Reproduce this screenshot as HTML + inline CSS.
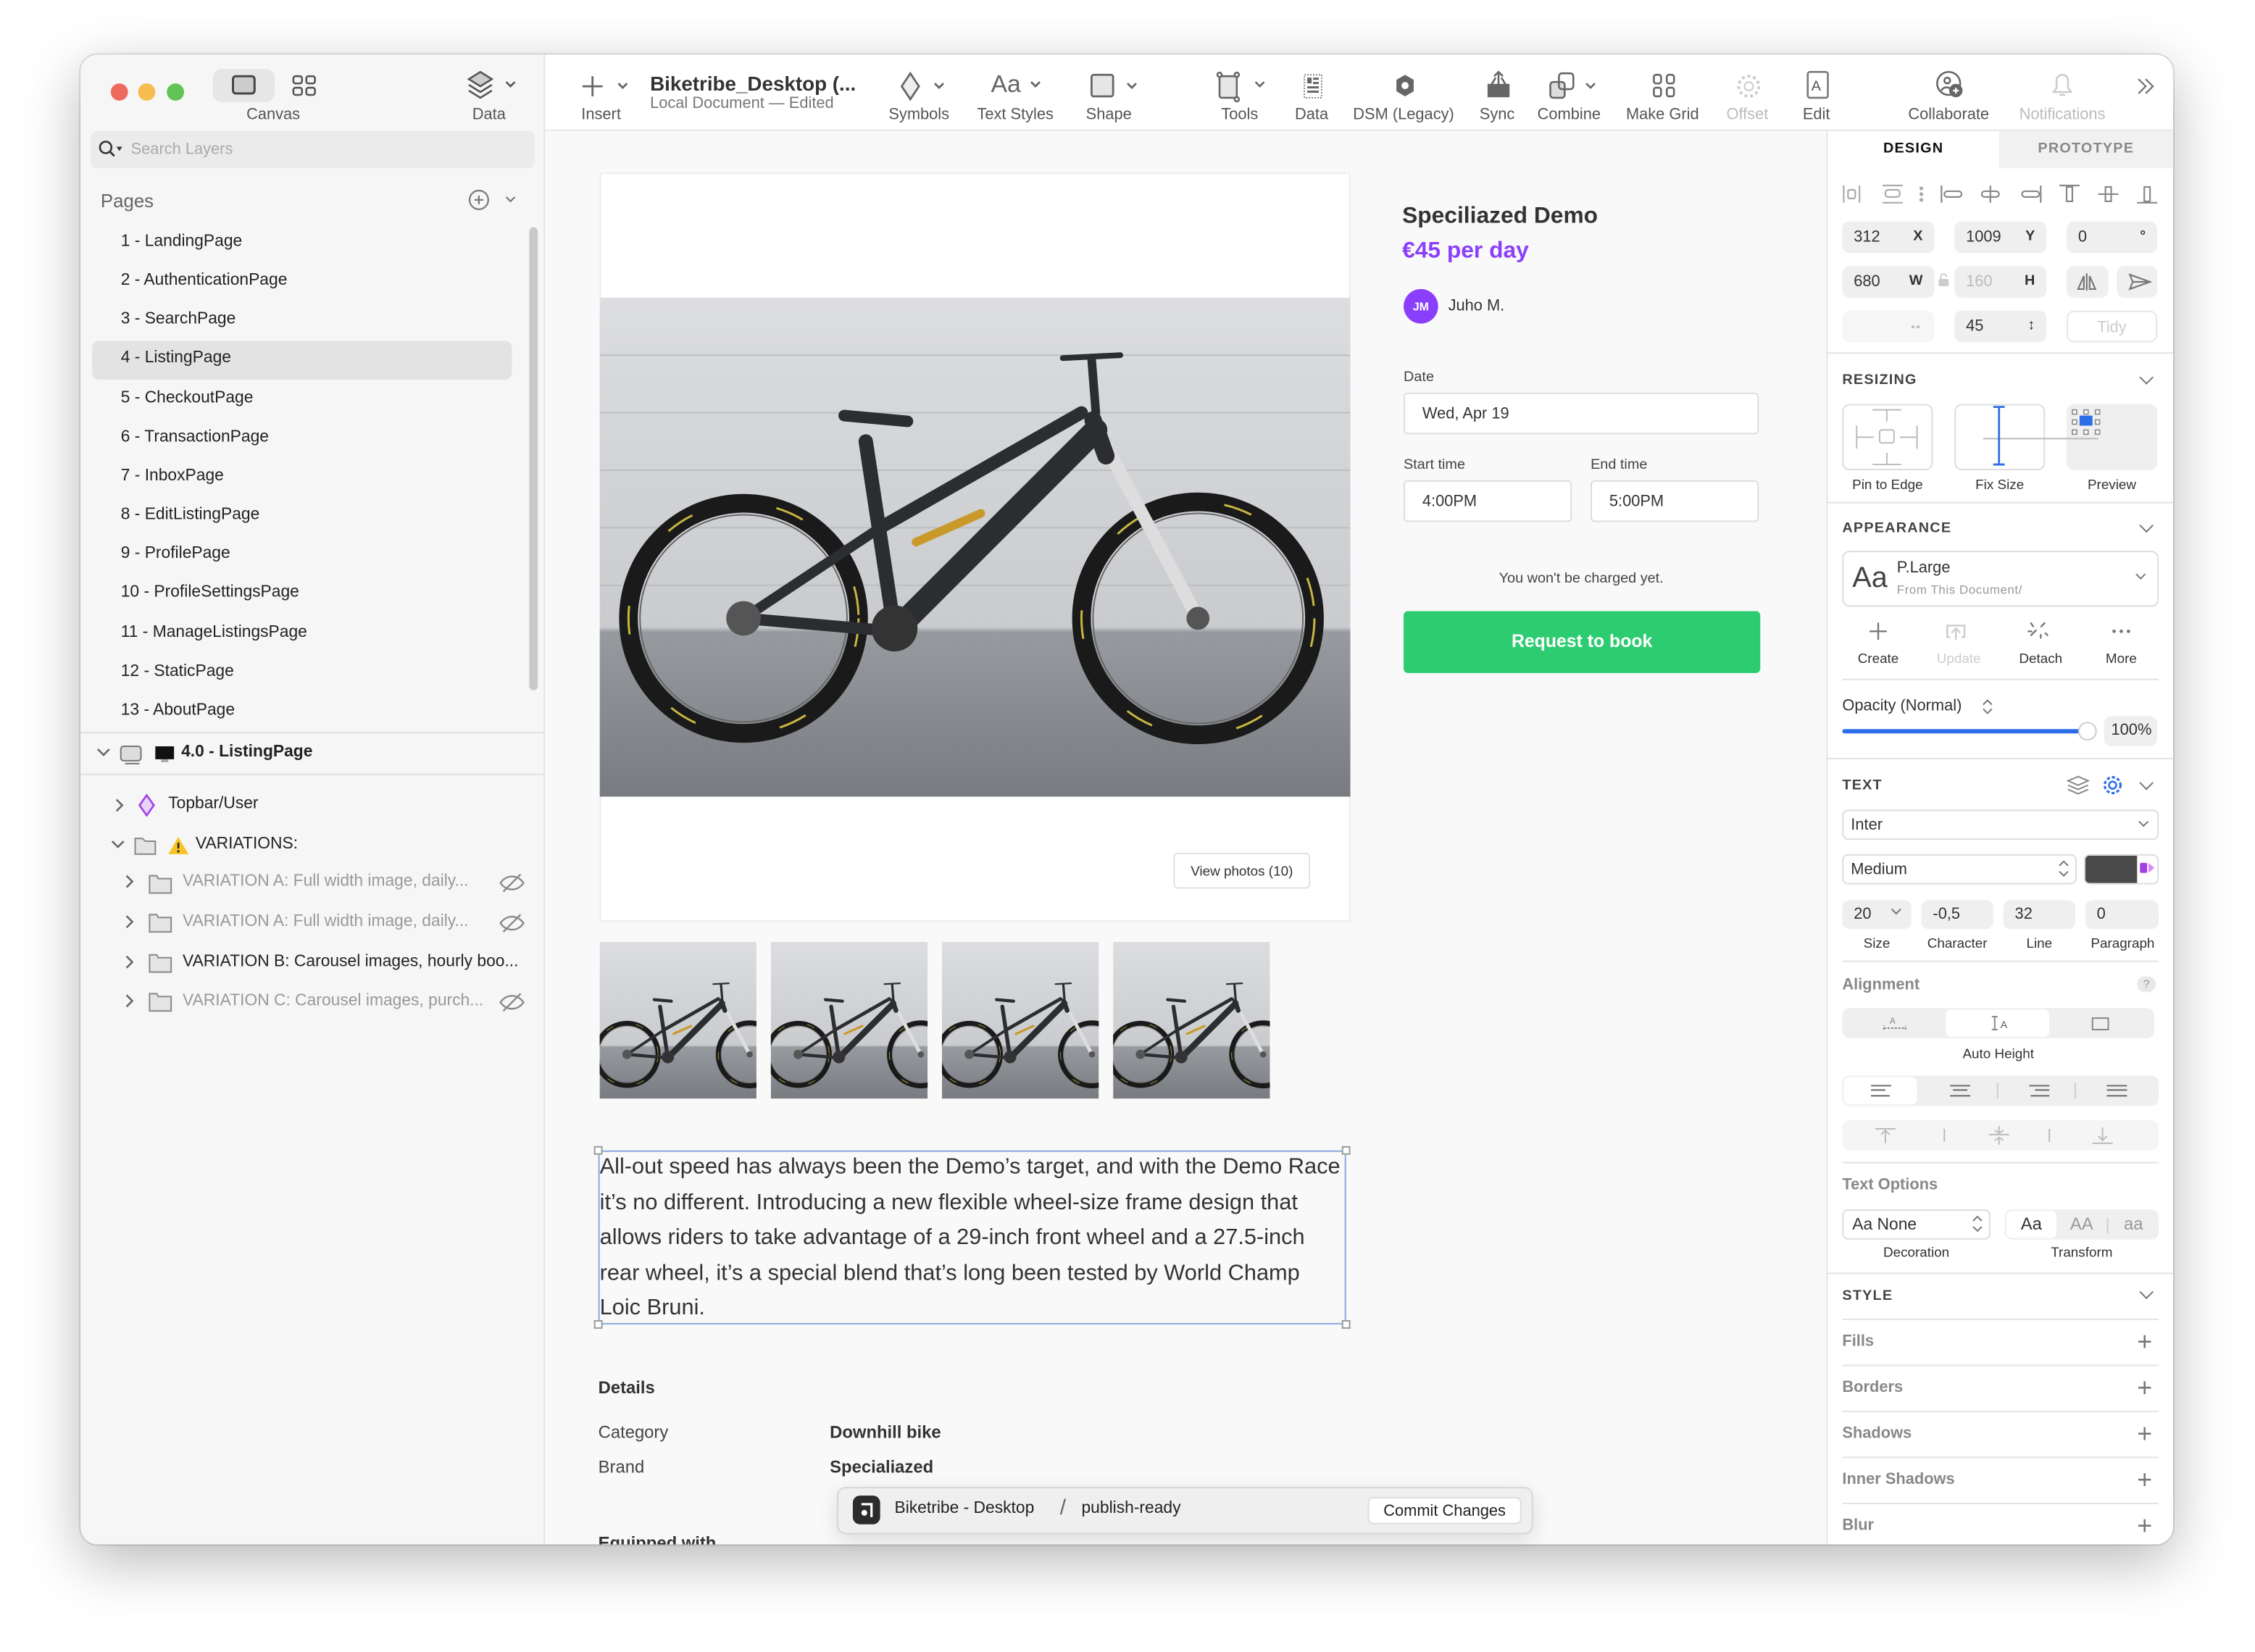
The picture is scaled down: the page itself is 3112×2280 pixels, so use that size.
<!DOCTYPE html>
<html><head><meta charset="utf-8">
<style>
*{box-sizing:border-box;margin:0;padding:0}
html,body{width:3112px;height:2280px;overflow:hidden;background:#fff}
#s{position:absolute;left:0;top:0;width:1568px;height:1149px;transform:scale(1.98469);transform-origin:0 0;font-family:"Liberation Sans",sans-serif;color:#222}
.a{position:absolute}
.win{left:56px;top:38px;width:1455px;height:1036px;border-radius:12px;overflow:hidden;background:#f9f9f9;box-shadow:0 12px 40px rgba(0,0,0,.28),0 0 0 1px rgba(0,0,0,.12)}
.lbl{font-size:11px;color:#555;text-align:center;white-space:nowrap}
.gry{color:#bbb}
.pg{position:absolute;left:84px;font-size:11.5px;color:#222;white-space:nowrap}
.rp{font-size:10.5px;color:#333}
.fld{position:absolute;height:22px;background:#efefef;border-radius:5px;font-size:11px;color:#333;padding:5px 0 0 8px}
.fld b{position:absolute;right:8px;top:5px;font-size:10px}
.sec{position:absolute;left:1281px;font-size:10px;font-weight:bold;letter-spacing:.6px;color:#444}
.hr{position:absolute;height:1px;background:#e3e3e3}
.chev{position:absolute;width:7px;height:7px;border-right:1.2px solid #777;border-bottom:1.2px solid #777;transform:rotate(45deg)}
.plus{position:absolute;font-size:18px;color:#777;line-height:1}
.st{position:absolute;left:1281px;font-size:11px;font-weight:bold;color:#888}
</style></head><body><div id="s">
<div class="a win"></div>
<div class="a" style="left:56px;top:38px;width:323px;height:1036px;background:#f6f6f6;border-right:1px solid #e2e2e2;border-radius:12px 0 0 12px"></div>
<div class="a" style="left:379px;top:38px;width:1132px;height:53px;background:#fff;border-bottom:1px solid #e4e4e4;border-radius:0 12px 0 0"></div>
<div class="a" style="left:1270px;top:91px;width:241px;height:983px;background:#fff;border-left:1px solid #e4e4e4;border-radius:0 0 12px 0"></div>

<div class="a" style="left:77px;top:58px;width:12px;height:12px;border-radius:50%;background:#ee6a5f"></div>
<div class="a" style="left:96px;top:58px;width:12px;height:12px;border-radius:50%;background:#f5bd4f"></div>
<div class="a" style="left:116px;top:58px;width:12px;height:12px;border-radius:50%;background:#61c454"></div>
<div class="a" style="left:148px;top:48px;width:43px;height:23px;border-radius:6px;background:#e6e6e6"></div>
<svg class="a" style="left:160px;top:51px" width="20" height="17"><rect x="2" y="2" width="15" height="12" rx="2" fill="#ccc" stroke="#444" stroke-width="1.5"/></svg>
<svg class="a" style="left:202px;top:51px" width="20" height="17"><g fill="none" stroke="#555" stroke-width="1.3"><rect x="2" y="2" width="6" height="5" rx="1.5"/><rect x="11" y="2" width="6" height="5" rx="1.5"/><rect x="2" y="10" width="6" height="5" rx="1.5"/><rect x="11" y="10" width="6" height="5" rx="1.5"/></g></svg>
<div class="a lbl" style="left:160px;top:74px;width:60px">Canvas</div>
<svg class="a" style="left:323px;top:48px" width="40" height="22"><g fill="none" stroke="#555" stroke-width="1.3"><path d="M3 7l8-5 8 5-8 5z" fill="#ccc"/><path d="M3 11l8 5 8-5M3 15l8 5 8-5"/><path d="M29 9l3 3 3-3"/></g></svg>
<div class="a lbl" style="left:320px;top:74px;width:40px">Data</div>

<svg class="a" style="left:402px;top:50px" width="40" height="20"><g fill="none" stroke="#666" stroke-width="1.4"><path d="M10 3v14M3 10h14"/><path d="M28 8l3 3 3-3"/></g></svg>
<div class="a lbl" style="left:398px;top:74px;width:40px">Insert</div>
<div class="a" style="left:452px;top:50px;font-size:14px;font-weight:bold;color:#333;white-space:nowrap">Biketribe_Desktop (...</div>
<div class="a" style="left:452px;top:66px;font-size:11px;color:#777;white-space:nowrap">Local Document — Edited</div>
<svg class="a" style="left:623px;top:49px" width="40" height="22"><g fill="none" stroke="#666" stroke-width="1.4"><path d="M10 2l6 9-6 9-6-9z" fill="#eee"/><path d="M27 9l3 3 3-3"/></g></svg>
<div class="a lbl" style="left:609px;top:74px;width:60px">Symbols</div>
<div class="a" style="left:689px;top:49px;font-size:17px;color:#666">Aa</div>
<svg class="a" style="left:714px;top:52px" width="14" height="14"><path d="M3 5l3 3 3-3" fill="none" stroke="#666" stroke-width="1.4"/></svg>
<div class="a lbl" style="left:670px;top:74px;width:72px">Text Styles</div>
<svg class="a" style="left:756px;top:49px" width="40" height="22"><g fill="none" stroke="#666" stroke-width="1.4"><rect x="3" y="3" width="15" height="15" rx="1.5" fill="#e6e6e6"/><path d="M28 9l3 3 3-3"/></g></svg>
<div class="a lbl" style="left:741px;top:74px;width:60px">Shape</div>
<svg class="a" style="left:845px;top:48px" width="40" height="24"><g fill="none" stroke="#666" stroke-width="1.3"><rect x="3" y="5" width="12" height="15" rx="1.5" fill="#e6e6e6"/><circle cx="3" cy="4" r="1.5"/><circle cx="15" cy="4" r="1.5"/><circle cx="15" cy="21" r="1.5"/><path d="M28 9l3 3 3-3"/></g></svg>
<div class="a lbl" style="left:842px;top:74px;width:40px">Tools</div>
<svg class="a" style="left:904px;top:50px" width="18" height="20"><g fill="#666"><rect x="3" y="2" width="12" height="16" fill="none" stroke="#888" stroke-dasharray="1 1"/><rect x="5" y="4" width="3" height="4"/><rect x="9" y="4" width="4" height="1.5"/><rect x="9" y="7" width="4" height="1.5"/><rect x="5" y="10" width="8" height="1.5"/><rect x="5" y="13" width="8" height="1.5"/></g></svg>
<div class="a lbl" style="left:892px;top:74px;width:40px">Data</div>
<svg class="a" style="left:968px;top:50px" width="18" height="20"><path d="M9 2l6 3.5v8L9 17l-6-3.5v-8z" fill="#666"/><circle cx="9" cy="9.5" r="2.5" fill="#fff"/></svg>
<div class="a lbl" style="left:936px;top:74px;width:80px">DSM (Legacy)</div>
<svg class="a" style="left:1032px;top:48px" width="20" height="22"><g stroke="#666" stroke-width="1.3" fill="none"><path d="M3 11h14v8H3z" fill="#666"/><path d="M5 11l3-5M15 11l-3-5"/><path d="M10 14V2M7 5l3-3 3 3"/></g></svg>
<div class="a lbl" style="left:1021px;top:74px;width:40px">Sync</div>
<svg class="a" style="left:1076px;top:49px" width="40" height="22"><g stroke="#666" stroke-width="1.3" fill="none"><rect x="2" y="8" width="10" height="11" rx="2" fill="#ddd"/><rect x="8" y="2" width="10" height="11" rx="2"/><path d="M27 9l3 3 3-3"/></g></svg>
<div class="a lbl" style="left:1061px;top:74px;width:60px">Combine</div>
<svg class="a" style="left:1148px;top:50px" width="20" height="20"><g fill="none" stroke="#666" stroke-width="1.3"><rect x="2" y="2" width="5" height="6" rx="1.5"/><rect x="11" y="2" width="5" height="6" rx="1.5"/><rect x="2" y="11" width="5" height="6" rx="1.5"/><rect x="11" y="11" width="5" height="6" rx="1.5"/></g></svg>
<div class="a lbl" style="left:1121px;top:74px;width:70px">Make Grid</div>
<svg class="a" style="left:1206px;top:50px" width="20" height="20"><circle cx="10" cy="10" r="7" fill="none" stroke="#ccc" stroke-width="2" stroke-dasharray="2 2"/><circle cx="10" cy="10" r="3" fill="none" stroke="#ccc"/></svg>
<div class="a lbl gry" style="left:1195px;top:74px;width:40px">Offset</div>
<svg class="a" style="left:1254px;top:48px" width="20" height="22"><rect x="3" y="2" width="14" height="18" rx="1.5" fill="none" stroke="#777" stroke-width="1.3"/><text x="5.5" y="15" font-size="10" font-family="Liberation Sans" fill="#555">A</text></svg>
<div class="a lbl" style="left:1243px;top:74px;width:40px">Edit</div>
<svg class="a" style="left:1345px;top:48px" width="22" height="22"><g fill="none" stroke="#666" stroke-width="1.3"><circle cx="10" cy="10" r="8"/><circle cx="9" cy="8" r="2"/><path d="M5 15c1-3 6-3 7 0"/><circle cx="15" cy="15" r="4" fill="#666"/></g><path d="M15 13v4M13 15h4" stroke="#fff" stroke-width="1.2"/></svg>
<div class="a lbl" style="left:1320px;top:74px;width:70px">Collaborate</div>
<svg class="a" style="left:1424px;top:48px" width="20" height="22"><path d="M4 16h12l-2-3V8a4 4 0 0 0-8 0v5zM8 18h4" fill="none" stroke="#ccc" stroke-width="1.3"/></svg>
<div class="a lbl gry" style="left:1394px;top:74px;width:80px">Notifications</div>
<svg class="a" style="left:1484px;top:52px" width="16" height="16"><path d="M3 3l5 5-5 5M8 3l5 5-5 5" fill="none" stroke="#777" stroke-width="1.2"/></svg>

<div class="a" style="left:63px;top:91px;width:309px;height:26px;background:#ebebeb;border-radius:5px"></div>
<svg class="a" style="left:68px;top:97px" width="18" height="14"><circle cx="5.5" cy="5.5" r="4" fill="none" stroke="#333" stroke-width="1.3"/><path d="M8.5 8.5l3 3" stroke="#333" stroke-width="1.4"/><path d="M13 5h4l-2 3z" fill="#333"/></svg>
<div class="a" style="left:91px;top:98px;font-size:11px;color:#aaa">Search Layers</div>

<div class="a" style="left:70px;top:132px;font-size:13px;color:#666">Pages</div>
<svg class="a" style="left:325px;top:131px" width="40" height="16"><circle cx="8" cy="8" r="6.5" fill="none" stroke="#777" stroke-width="1.1"/><path d="M8 5v6M5 8h6M27 6l3 3 3-3" stroke="#777" stroke-width="1.1" fill="none"/></svg>
<div class="a" style="left:64px;top:237px;width:292px;height:27px;background:#e3e3e3;border-radius:5px"></div>
<div class="a" style="left:368px;top:158px;width:6px;height:322px;background:#c9c9c9;border-radius:3px"></div>
<div class="pg" style="top:162px">1 - LandingPage</div>
<div class="pg" style="top:189px">2 - AuthenticationPage</div>
<div class="pg" style="top:216px">3 - SearchPage</div>
<div class="pg" style="top:243px">4 - ListingPage</div>
<div class="pg" style="top:271px">5 - CheckoutPage</div>
<div class="pg" style="top:298px">6 - TransactionPage</div>
<div class="pg" style="top:325px">7 - InboxPage</div>
<div class="pg" style="top:352px">8 - EditListingPage</div>
<div class="pg" style="top:379px">9 - ProfilePage</div>
<div class="pg" style="top:406px">10 - ProfileSettingsPage</div>
<div class="pg" style="top:434px">11 - ManageListingsPage</div>
<div class="pg" style="top:461px">12 - StaticPage</div>
<div class="pg" style="top:488px">13 - AboutPage</div>
<div class="hr" style="left:56px;top:509px;width:323px;background:#e0e0e0"></div>
<div class="hr" style="left:56px;top:538px;width:323px;background:#e0e0e0"></div>
<svg class="a" style="left:65px;top:516px" width="80" height="18"><path d="M3 5l4 4 4-4" fill="none" stroke="#666" stroke-width="1.3"/><rect x="19" y="3" width="14" height="10" rx="2" fill="#ddd" stroke="#777"/><path d="M22 15h10" stroke="#777"/><rect x="43" y="3" width="13" height="9" fill="#111"/><rect x="47" y="12" width="5" height="2" fill="#aaa"/></svg>
<div class="a" style="left:126px;top:517px;font-size:11.5px;font-weight:bold;color:#222">4.0 - ListingPage</div>
<svg class="a" style="left:78px;top:552px" width="34" height="16"><path d="M3 4l4 4-4 4" fill="none" stroke="#666" stroke-width="1.3"/><path d="M24 1l5 7-5 7-5-7z" fill="#e6d4fa" stroke="#a23ee6" stroke-width="1.3"/></svg>
<div class="a" style="left:117px;top:553px;font-size:11.5px;color:#222">Topbar/User</div>
<svg class="a" style="left:76px;top:580px" width="60" height="16"><path d="M2 5l4 4 4-4" fill="none" stroke="#666" stroke-width="1.3"/><path d="M18 3h5l2 2h7v9H18z" fill="#e4e4e4" stroke="#888"/><path d="M48 2l7 12H41z" fill="#f7c325"/><path d="M48 6v4" stroke="#222" stroke-width="1.3"/><circle cx="48" cy="12" r=".8" fill="#222"/></svg>
<div class="a" style="left:136px;top:581px;font-size:11.5px;color:#222">VARIATIONS:</div>
<svg class="a" style="left:86px;top:606px" width="36" height="100"><g fill="#e4e4e4" stroke="#888"><path d="M2 3l4 4-4 4" fill="none" stroke="#666" stroke-width="1.3"/><path d="M18 3h5l1 2h9v10H18z"/><path d="M2 31l4 4-4 4" fill="none" stroke="#666" stroke-width="1.3"/><path d="M18 30h5l1 2h9v10H18z"/><path d="M2 59l4 4-4 4" fill="none" stroke="#666" stroke-width="1.3"/><path d="M18 58h5l1 2h9v10H18z"/><path d="M2 86l4 4-4 4" fill="none" stroke="#666" stroke-width="1.3"/><path d="M18 85h5l1 2h9v10H18z"/></g></svg>
<div class="a" style="left:127px;top:607px;font-size:11.5px;color:#999;white-space:nowrap">VARIATION A: Full width image, daily...</div>
<div class="a" style="left:127px;top:635px;font-size:11.5px;color:#999;white-space:nowrap">VARIATION A: Full width image, daily...</div>
<div class="a" style="left:127px;top:663px;font-size:11.5px;color:#222;white-space:nowrap">VARIATION B: Carousel images, hourly boo...</div>
<div class="a" style="left:127px;top:690px;font-size:11.5px;color:#999;white-space:nowrap">VARIATION C: Carousel images, purch...</div>
<svg class="a" style="left:346px;top:606px" width="20" height="100"><g fill="none" stroke="#888" stroke-width="1.2"><path d="M2 8c4-6 12-6 16 0-4 6-12 6-16 0zM4 14L16 2"/><path d="M2 36c4-6 12-6 16 0-4 6-12 6-16 0zM4 42L16 30"/><path d="M2 91c4-6 12-6 16 0-4 6-12 6-16 0zM4 97L16 85"/></g></svg>

<div class="a" style="left:417px;top:120px;width:522px;height:521px;background:#fff;border:1px solid #ececec"></div>
<svg class="a" style="left:417px;top:207px" width="522" height="347" viewBox="0 0 522 347">
<defs><linearGradient id="w" x1="0" y1="0" x2="0" y2="1"><stop offset="0" stop-color="#dcdde0"/><stop offset=".66" stop-color="#c9cbce"/><stop offset=".67" stop-color="#979a9f"/><stop offset="1" stop-color="#787b80"/></linearGradient>
<g id="bike"><g fill="none" stroke="#1a1a1a"><circle cx="100" cy="223" r="80" stroke-width="13"/><circle cx="416" cy="223" r="81" stroke-width="13"/><circle cx="100" cy="223" r="72" stroke="#666" stroke-width="1"/><circle cx="416" cy="223" r="73" stroke="#666" stroke-width="1"/></g><circle cx="100" cy="223" r="80" fill="none" stroke="#c9b640" stroke-width="1.5" stroke-dasharray="20 60"/><circle cx="416" cy="223" r="81" fill="none" stroke="#c9b640" stroke-width="1.5" stroke-dasharray="20 60"/><g stroke="#2b2d30" stroke-linecap="round" fill="none"><path d="M205 232L345 92" stroke-width="16"/><path d="M195 160L335 80" stroke-width="9"/><path d="M205 232L185 100" stroke-width="10"/><path d="M205 232L100 223" stroke-width="8"/><path d="M195 160L100 223" stroke-width="7"/><path d="M345 90L416 223" stroke="#ddd" stroke-width="9"/><path d="M343 85L352 110" stroke-width="12"/><path d="M322 42L362 40" stroke-width="4"/><path d="M342 42L345 80" stroke-width="6"/><path d="M170 82L214 86" stroke-width="8"/><path d="M220 170L265 150" stroke="#c99a2a" stroke-width="6"/></g><circle cx="205" cy="230" r="16" fill="#333"/><circle cx="100" cy="223" r="12" fill="#555"/><circle cx="416" cy="223" r="8" fill="#555"/></g></defs>
<rect width="522" height="347" fill="url(#w)"/>
<g stroke="#bcbec1" stroke-width="1"><path d="M0 40h522M0 80h522M0 120h522M0 160h522M0 200h522"/></g>
<use href="#bike"/>
</svg>
<div class="a" style="left:816px;top:593px;width:95px;height:25px;border:1px solid #e2e2e2;border-radius:3px;background:#fff;font-size:9.5px;color:#333;text-align:center;padding-top:7px">View photos (10)</div>
<svg class="a" style="left:417px;top:655px" width="470" height="110">
<defs><clipPath id="c"><rect width="109" height="109"/></clipPath></defs>
<g clip-path="url(#c)"><rect width="109" height="109" fill="url(#w)"/><g transform="translate(-8,18) scale(.27)"><use href="#bike"/></g></g>
<g transform="translate(119,0)" clip-path="url(#c)"><rect width="109" height="109" fill="url(#w)"/><g transform="translate(-8,18) scale(.27)"><use href="#bike"/></g></g>
<g transform="translate(238,0)" clip-path="url(#c)"><rect width="109" height="109" fill="url(#w)"/><g transform="translate(-8,18) scale(.27)"><use href="#bike"/></g></g>
<g transform="translate(357,0)" clip-path="url(#c)"><rect width="109" height="109" fill="url(#w)"/><g transform="translate(-8,18) scale(.27)"><use href="#bike"/></g></g>
</svg>
<div class="a" style="left:416px;top:800px;width:520px;height:121px;border:1px solid #8aa7e0"></div>
<div class="a" style="left:413px;top:797px;width:6px;height:6px;border:1px solid #999;background:#fff"></div>
<div class="a" style="left:933px;top:797px;width:6px;height:6px;border:1px solid #999;background:#fff"></div>
<div class="a" style="left:413px;top:918px;width:6px;height:6px;border:1px solid #999;background:#fff"></div>
<div class="a" style="left:933px;top:918px;width:6px;height:6px;border:1px solid #999;background:#fff"></div>
<div class="a" style="left:417px;top:800px;font-size:15.5px;line-height:24.6px;color:#333;white-space:nowrap">All-out speed has always been the Demo’s target, and with the Demo Race<br>it’s no different. Introducing a new flexible wheel-size frame design that<br>allows riders to take advantage of a 29-inch front wheel and a 27.5-inch<br>rear wheel, it’s a special blend that’s long been tested by World Champ<br>Loic Bruni.</div>
<div class="a" style="left:416px;top:958px;font-size:12px;font-weight:bold;color:#333">Details</div>
<div class="a" style="left:416px;top:989px;font-size:12px;color:#444">Category</div>
<div class="a" style="left:577px;top:989px;font-size:12px;font-weight:bold;color:#333">Downhill bike</div>
<div class="a" style="left:416px;top:1013px;font-size:12px;color:#444">Brand</div>
<div class="a" style="left:577px;top:1013px;font-size:12px;font-weight:bold;color:#333">Specialiazed</div>
<div class="a" style="left:416px;top:1066px;font-size:12px;font-weight:bold;color:#333;height:8px;overflow:hidden">Equipped with</div>
<div class="a" style="left:975px;top:142px;font-size:16px;font-weight:bold;color:#333">Speciliazed Demo</div>
<div class="a" style="left:975px;top:166px;font-size:16px;font-weight:bold;color:#8a3ffc">€45 per day</div>
<div class="a" style="left:976px;top:201px;width:24px;height:24px;border-radius:50%;background:#8a3ffc;color:#fff;font-size:8px;font-weight:bold;text-align:center;padding-top:7.5px">JM</div>
<div class="a" style="left:1007px;top:207px;font-size:11px;color:#333">Juho M.</div>
<div class="a" style="left:976px;top:257px;font-size:10px;color:#444">Date</div>
<div class="a" style="left:976px;top:273px;width:247px;height:29px;border:1px solid #ddd;border-radius:3px;background:#fff;font-size:11px;color:#333;padding:8px 0 0 12px">Wed, Apr 19</div>
<div class="a" style="left:976px;top:318px;font-size:10px;color:#444">Start time</div>
<div class="a" style="left:1106px;top:318px;font-size:10px;color:#444">End time</div>
<div class="a" style="left:976px;top:334px;width:117px;height:29px;border:1px solid #ddd;border-radius:3px;background:#fff;font-size:11px;color:#333;padding:8px 0 0 12px">4:00PM</div>
<div class="a" style="left:1106px;top:334px;width:117px;height:29px;border:1px solid #ddd;border-radius:3px;background:#fff;font-size:11px;color:#333;padding:8px 0 0 12px">5:00PM</div>
<div class="a" style="left:976px;top:397px;width:247px;text-align:center;font-size:10px;color:#444">You won't be charged yet.</div>
<div class="a" style="left:976px;top:425px;width:248px;height:43px;border-radius:3px;background:#2ecc71;color:#fff;font-size:12.5px;font-weight:bold;text-align:center;padding-top:14px">Request to book</div>
<div class="a" style="left:582px;top:1034px;width:484px;height:33px;background:#efefef;border:1px solid #d6d6d6;border-radius:6px;box-shadow:0 4px 14px rgba(0,0,0,.12)"></div>
<div class="a" style="left:593px;top:1040px;width:19px;height:20px;border-radius:5px;background:#2b2b2b"></div>
<svg class="a" style="left:593px;top:1040px" width="19" height="20"><path d="M6 6h7v9" fill="none" stroke="#fff" stroke-width="1.6"/><circle cx="8" cy="12" r="2" fill="#fff"/></svg>
<div class="a" style="left:622px;top:1043px;font-size:11.5px;color:#222;white-space:nowrap">Biketribe - Desktop</div>
<div class="a" style="left:737px;top:1040px;font-size:15px;color:#666">/</div>
<div class="a" style="left:752px;top:1043px;font-size:11.5px;color:#222">publish-ready</div>
<div class="a" style="left:951px;top:1041px;width:107px;height:19px;background:#fff;border:1px solid #ddd;border-radius:4px;font-size:11px;color:#222;text-align:center;padding-top:3px">Commit Changes</div>

<div class="a" style="left:1390px;top:91px;width:121px;height:26px;background:#f1f1f1"></div>
<div class="a" style="left:1271px;top:98px;width:119px;text-align:center;font-size:10px;font-weight:bold;letter-spacing:.6px;color:#111">DESIGN</div>
<div class="a" style="left:1390px;top:98px;width:121px;text-align:center;font-size:10px;font-weight:bold;letter-spacing:.6px;color:#888">PROTOTYPE</div>
<svg class="a" style="left:1280px;top:126px" width="222" height="18"><g fill="none" stroke="#aaa" stroke-width="1.1"><path d="M2 3v12M13 3v12"/><rect x="5" y="6" width="5" height="6" rx="1"/><path d="M29 3h14M29 15h14"/><rect x="31" y="6" width="10" height="5" rx="2"/><circle cx="56" cy="5" r=".8" fill="#aaa"/><circle cx="56" cy="9" r=".8" fill="#aaa"/><circle cx="56" cy="13" r=".8" fill="#aaa"/><path d="M70 3v12" stroke="#888"/><rect x="72" y="7" width="12" height="4" rx="2" stroke="#888"/><path d="M104 3v12" stroke="#888"/><rect x="98" y="7" width="12" height="4" rx="2" stroke="#888"/><path d="M139 3v12" stroke="#888"/><rect x="126" y="7" width="12" height="4" rx="2" stroke="#888"/><path d="M152 3h14" stroke="#888"/><rect x="157" y="4" width="4" height="10" stroke="#888"/><path d="M179 9h14" stroke="#888"/><rect x="184" y="4" width="4" height="10" stroke="#888"/><path d="M206 15h14" stroke="#888"/><rect x="211" y="4" width="4" height="10" stroke="#888"/></g></svg>
<div class="fld" style="left:1281px;top:154px;width:64px">312<b>X</b></div>
<div class="fld" style="left:1359px;top:154px;width:64px">1009<b>Y</b></div>
<div class="fld" style="left:1437px;top:154px;width:63px">0<b>°</b></div>
<div class="fld" style="left:1281px;top:185px;width:64px">680<b>W</b></div>
<svg class="a" style="left:1346px;top:189px" width="12" height="12"><rect x="2" y="5" width="7" height="5" rx="1" fill="#ccc"/><path d="M3.5 5V3.5a2 2 0 0 1 4 0" fill="none" stroke="#ccc"/></svg>
<div class="fld" style="left:1359px;top:185px;width:64px;color:#bbb">160<b style="color:#333">H</b></div>
<div class="fld" style="left:1437px;top:185px;width:29px"></div>
<div class="fld" style="left:1472px;top:185px;width:28px"></div>
<svg class="a" style="left:1444px;top:188px" width="54" height="16"><g fill="none" stroke="#777" stroke-width="1.1"><path d="M7 2v12M5 4l-4 9h4zM9 4l4 9H9z"/><path d="M37 3l14 5-14 5 2-5z M39 8h12"/></g></svg>
<div class="fld" style="left:1281px;top:216px;width:64px;background:#f6f6f6"><b style="color:#999">↔</b></div>
<div class="fld" style="left:1359px;top:216px;width:64px">45<b>↕</b></div>
<div class="a" style="left:1437px;top:216px;width:63px;height:22px;border:1px solid #e6e6e6;border-radius:5px;font-size:11px;color:#ccc;text-align:center;padding-top:5px">Tidy</div>
<div class="hr" style="left:1270px;top:245px;width:241px"></div>
<div class="sec" style="top:259px">RESIZING</div>
<div class="chev" style="left:1489px;top:259px"></div>
<div class="a" style="left:1281px;top:281px;width:63px;height:46px;border:1px solid #ddd;border-radius:5px;background:#fff"></div>
<div class="a" style="left:1359px;top:281px;width:63px;height:46px;border:1px solid #ddd;border-radius:5px;background:#fff"></div>
<div class="a" style="left:1437px;top:281px;width:63px;height:46px;border-radius:5px;background:#efefef"></div>
<svg class="a" style="left:1281px;top:281px" width="222" height="46"><g fill="none" stroke="#bbb" stroke-width="1"><path d="M21 4h20M31 4v8M21 42h20M31 42v-8M10 15v16M10 23h12M52 15v16M52 23H40"/><rect x="26" y="18" width="10" height="9" rx="1.5"/><path d="M98 24h80"/></g><path d="M109 2v40M105 2h8M105 42h8" stroke="#2d6ee8" stroke-width="1.4"/><g fill="#fff" stroke="#888" stroke-width=".8"><rect x="160" y="4" width="3" height="3"/><rect x="168" y="4" width="3" height="3"/><rect x="176" y="4" width="3" height="3"/><rect x="160" y="11" width="3" height="3"/><rect x="176" y="11" width="3" height="3"/><rect x="160" y="18" width="3" height="3"/><rect x="168" y="18" width="3" height="3"/><rect x="176" y="18" width="3" height="3"/></g><rect x="165" y="8" width="9" height="7" fill="#2d6ee8"/></svg>
<div class="a rp" style="left:1281px;top:332px;width:63px;text-align:center;font-size:9.5px">Pin to Edge</div>
<div class="a rp" style="left:1359px;top:332px;width:63px;text-align:center;font-size:9.5px">Fix Size</div>
<div class="a rp" style="left:1437px;top:332px;width:63px;text-align:center;font-size:9.5px">Preview</div>
<div class="hr" style="left:1270px;top:349px;width:241px"></div>
<div class="sec" style="top:362px">APPEARANCE</div>
<div class="chev" style="left:1489px;top:362px"></div>
<div class="a" style="left:1281px;top:383px;width:220px;height:39px;border:1px solid #ddd;border-radius:5px;background:#fff"></div>
<div class="a" style="left:1288px;top:391px;font-size:20px;color:#444">Aa</div>
<div class="a" style="left:1319px;top:389px;font-size:11px;color:#333">P.Large</div>
<div class="a" style="left:1319px;top:405px;font-size:8.5px;color:#999;letter-spacing:.3px">From This Document/</div>
<div class="chev" style="left:1486px;top:397px;width:5px;height:5px"></div>
<svg class="a" style="left:1296px;top:430px" width="190" height="18"><g fill="none" stroke-width="1.2"><path d="M10 3v12M4 9h12" stroke="#777"/><path d="M60 13h-2V5h12v8h-2M64 15V8M61 10l3-3 3 3" stroke="#ccc"/><path d="M116 12l4-4M123 6l3-3M116 3l2 3M128 12l-2-2M114 9h3M123 14v-3" stroke="#777"/><circle cx="174" cy="9" r="1.2" fill="#777" stroke="none"/><circle cx="179" cy="9" r="1.2" fill="#777" stroke="none"/><circle cx="184" cy="9" r="1.2" fill="#777" stroke="none"/></g></svg>
<div class="a rp" style="left:1286px;top:453px;width:40px;text-align:center;font-size:9.5px">Create</div>
<div class="a rp" style="left:1342px;top:453px;width:40px;text-align:center;font-size:9.5px;color:#ccc">Update</div>
<div class="a rp" style="left:1396px;top:453px;width:46px;text-align:center;font-size:9.5px">Detach</div>
<div class="a rp" style="left:1455px;top:453px;width:40px;text-align:center;font-size:9.5px">More</div>
<div class="hr" style="left:1281px;top:472px;width:220px"></div>
<div class="a rp" style="left:1281px;top:485px;font-size:11px">Opacity (Normal)</div>
<svg class="a" style="left:1377px;top:485px" width="10" height="13"><path d="M2 5l3-3 3 3M2 8l3 3 3-3" fill="none" stroke="#777"/></svg>
<div class="a" style="left:1281px;top:507px;width:170px;height:2.5px;background:#2d6ee8;border-radius:2px"></div>
<div class="a" style="left:1445px;top:502px;width:13px;height:13px;border-radius:50%;background:#fff;border:1px solid #ccc"></div>
<div class="fld" style="left:1463px;top:498px;width:37px;height:21px;padding:4px 0 0 5px">100%</div>
<div class="hr" style="left:1270px;top:527px;width:241px"></div>
<div class="sec" style="top:541px">TEXT</div>
<svg class="a" style="left:1436px;top:538px" width="44" height="16"><g fill="none" stroke-width="1"><path d="M2 5l7-3 7 3-7 3z M2 8l7 3 7-3M2 11l7 3 7-3" stroke="#888"/><circle cx="33" cy="8" r="2.5" stroke="#2d6ee8" stroke-width="1.3"/><circle cx="33" cy="8" r="5.5" stroke="#2d6ee8" stroke-width="1.6" stroke-dasharray="2.2 1.4"/></g></svg>
<div class="chev" style="left:1489px;top:541px"></div>
<div class="a" style="left:1281px;top:563px;width:220px;height:21px;border:1px solid #ddd;border-radius:4px;background:#fff;font-size:11px;color:#333;padding:4px 0 0 5px">Inter</div>
<div class="chev" style="left:1488px;top:569px;width:5px;height:5px"></div>
<div class="a" style="left:1281px;top:594px;width:163px;height:21px;border:1px solid #ddd;border-radius:4px;background:#fff;font-size:11px;color:#333;padding:4px 0 0 5px">Medium</div>
<svg class="a" style="left:1430px;top:597px" width="10" height="14"><path d="M2 5l3-3 3 3M2 9l3 3 3-3" fill="none" stroke="#777"/></svg>
<div class="a" style="left:1449px;top:594px;width:52px;height:21px;border:1px solid #ddd;border-radius:4px;background:#fff;overflow:hidden"><div style="width:36px;height:21px;background:#4a4a4a"></div></div>
<svg class="a" style="left:1487px;top:599px" width="12" height="10"><rect x="1" y="1" width="5" height="7" rx="1" fill="#a23ee6"/><path d="M7 1l4 3.5-4 3.5z" fill="#d58af5"/></svg>
<div class="fld" style="left:1281px;top:626px;width:48px;height:20px;padding-top:4px">20</div>
<div class="chev" style="left:1316px;top:630px;width:5px;height:5px"></div>
<div class="fld" style="left:1336px;top:626px;width:50px;height:20px;padding-top:4px">-0,5</div>
<div class="fld" style="left:1393px;top:626px;width:50px;height:20px;padding-top:4px">32</div>
<div class="fld" style="left:1450px;top:626px;width:51px;height:20px;padding-top:4px">0</div>
<div class="a rp" style="left:1281px;top:651px;width:48px;text-align:center;font-size:9.5px">Size</div>
<div class="a rp" style="left:1332px;top:651px;width:58px;text-align:center;font-size:9.5px">Character</div>
<div class="a rp" style="left:1393px;top:651px;width:50px;text-align:center;font-size:9.5px">Line</div>
<div class="a rp" style="left:1448px;top:651px;width:56px;text-align:center;font-size:9.5px">Paragraph</div>
<div class="hr" style="left:1281px;top:668px;width:220px"></div>
<div class="st" style="top:679px">Alignment</div>
<div class="a" style="left:1486px;top:679px;width:13px;height:11px;border-radius:6px;background:#e8e8e8;font-size:8px;color:#999;text-align:center;padding-top:1px">?</div>
<div class="a" style="left:1281px;top:701px;width:217px;height:21px;border-radius:5px;background:#efefef"></div>
<div class="a" style="left:1353px;top:702px;width:72px;height:19px;border-radius:4px;background:#fff"></div>
<svg class="a" style="left:1281px;top:701px" width="220" height="21"><g fill="none" stroke="#888" stroke-width="1"><path d="M29 15v-3M44 15v-3M29 14h15" stroke-dasharray="1.5 1"/><path d="M104 6h4M106 6v9M104 15h4"/><rect x="174" y="7" width="11" height="8"/></g><text x="33" y="11" font-size="6" fill="#888" font-family="Liberation Sans">A</text><text x="110" y="14" font-size="7" fill="#555" font-family="Liberation Sans">A</text></svg>
<div class="a rp" style="left:1281px;top:728px;width:217px;text-align:center;font-size:9.5px">Auto Height</div>
<div class="a" style="left:1281px;top:748px;width:220px;height:21px;border-radius:5px;background:#efefef"></div>
<div class="a" style="left:1282px;top:749px;width:51px;height:19px;border-radius:4px;background:#fff"></div>
<svg class="a" style="left:1281px;top:748px" width="220" height="21"><g stroke="#666" stroke-width="1"><path d="M20 7h14M20 10h10M20 14h13M75 7h14M77 10h10M75 14h14M130 7h14M134 10h10M131 14h13M184 7h14M184 10h14M184 14h14"/><path d="M108 5v11M162 5v11" stroke="#ccc"/></g></svg>
<div class="a" style="left:1281px;top:779px;width:220px;height:21px;border-radius:5px;background:#f5f5f5"></div>
<svg class="a" style="left:1281px;top:779px" width="220" height="21"><g stroke="#bbb" stroke-width="1" fill="none"><path d="M23 6h14M30 7v9M27 10l3-3 3 3M102 10h14M109 4v5M109 12v5M106 7l3 2 3-2M106 14l3-2 3 2M174 16h14M181 5v9M178 11l3 3 3-3M71 6v9M144 6v9"/></g></svg>
<div class="hr" style="left:1281px;top:808px;width:220px"></div>
<div class="st" style="top:818px">Text Options</div>
<div class="a" style="left:1281px;top:841px;width:103px;height:21px;border:1px solid #ddd;border-radius:4px;background:#fff;font-size:11.5px;color:#333;padding:4px 0 0 6px">Aa None</div>
<svg class="a" style="left:1370px;top:844px" width="10" height="14"><path d="M2 5l3-3 3 3M2 9l3 3 3-3" fill="none" stroke="#777"/></svg>
<div class="a" style="left:1394px;top:841px;width:107px;height:21px;border-radius:5px;background:#efefef"></div>
<div class="a" style="left:1395px;top:842px;width:35px;height:19px;border-radius:4px;background:#fff"></div>
<div class="a" style="left:1395px;top:844px;width:35px;text-align:center;font-size:12px;color:#333">Aa</div>
<div class="a" style="left:1430px;top:844px;width:35px;text-align:center;font-size:12px;color:#999">AA</div>
<div class="a" style="left:1465px;top:847px;width:1px;height:11px;background:#ccc"></div>
<div class="a" style="left:1466px;top:844px;width:35px;text-align:center;font-size:12px;color:#999">aa</div>
<div class="a rp" style="left:1281px;top:866px;width:103px;text-align:center;font-size:9.5px">Decoration</div>
<div class="a rp" style="left:1394px;top:866px;width:107px;text-align:center;font-size:9.5px">Transform</div>
<div class="hr" style="left:1270px;top:885px;width:241px"></div>
<div class="sec" style="top:896px">STYLE</div>
<div class="chev" style="left:1489px;top:895px"></div>
<div class="hr" style="left:1281px;top:917px;width:220px"></div>
<div class="st" style="top:927px">Fills</div><div class="plus" style="left:1486px;top:924px">+</div>
<div class="hr" style="left:1281px;top:949px;width:220px"></div>
<div class="st" style="top:959px">Borders</div><div class="plus" style="left:1486px;top:956px">+</div>
<div class="hr" style="left:1281px;top:981px;width:220px"></div>
<div class="st" style="top:991px">Shadows</div><div class="plus" style="left:1486px;top:988px">+</div>
<div class="hr" style="left:1281px;top:1013px;width:220px"></div>
<div class="st" style="top:1023px">Inner Shadows</div><div class="plus" style="left:1486px;top:1020px">+</div>
<div class="hr" style="left:1281px;top:1045px;width:220px"></div>
<div class="st" style="top:1055px">Blur</div><div class="plus" style="left:1486px;top:1052px">+</div>
</div></body></html>
